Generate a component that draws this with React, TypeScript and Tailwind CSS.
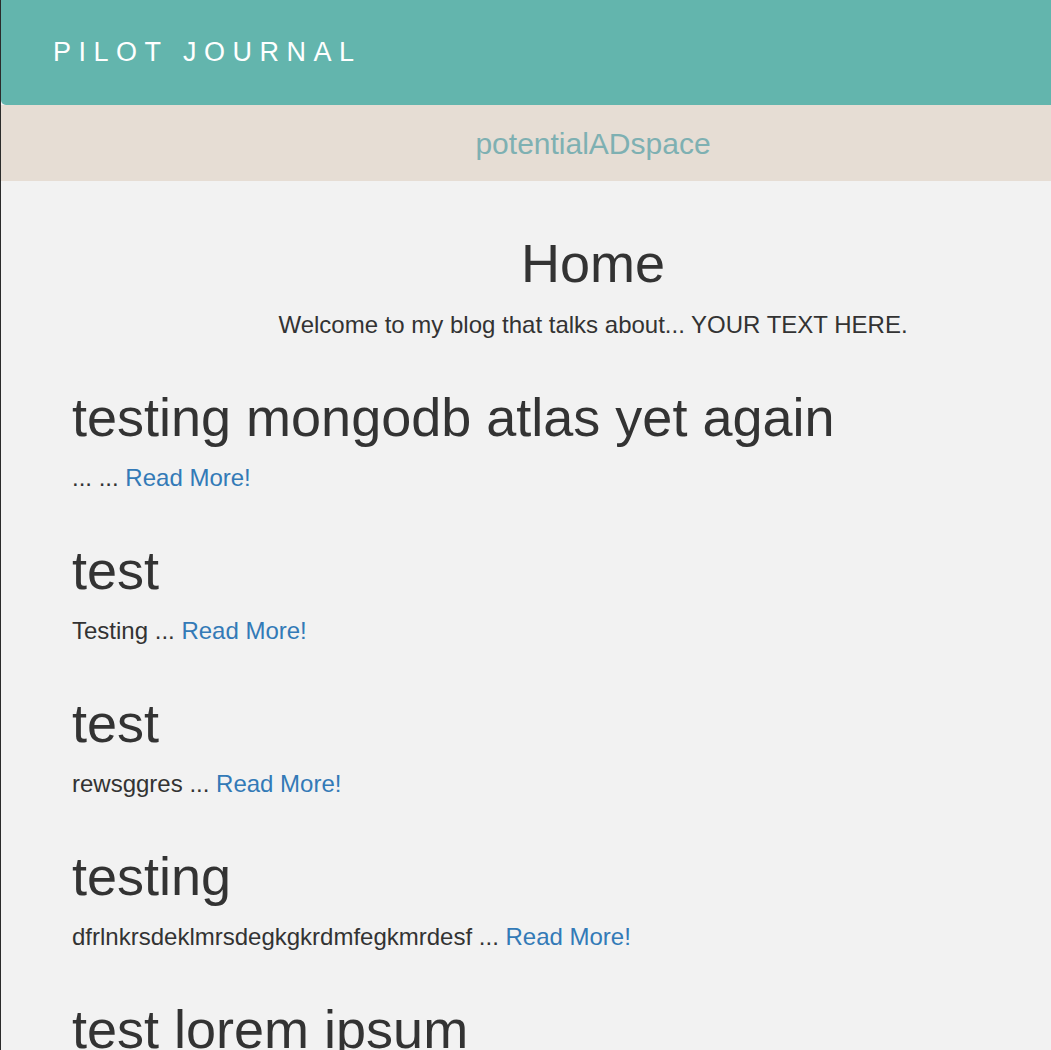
import React from "react";

type Post = { title: string; excerpt: string };

const posts: Post[] = [
  { title: "testing mongodb atlas yet again", excerpt: "... ..." },
  { title: "test", excerpt: "Testing ..." },
  { title: "test", excerpt: "rewsggres ..." },
  { title: "testing", excerpt: "dfrlnkrsdeklmrsdegkgkrdmfegkmrdesf ..." },
  { title: "test lorem ipsum", excerpt: "Lorem ipsum dolor sit amet ..." },
];

const App = () => {
  return (
    <div
      className="flex min-h-screen w-full bg-[#f2f2f2] text-[#333333]"
      style={{ fontFamily: '"Liberation Sans", Arial, sans-serif' }}
    >
      <div className="w-px shrink-0 bg-[#2b2b2b]" />
      <div className="flex min-w-0 flex-1 flex-col">
        <header className="flex h-[105px] items-center rounded-bl-[5px] bg-[#63b5ad] pl-[52px]">
          <span className="text-[27px] tracking-[7.5px] text-white">PILOT JOURNAL</span>
        </header>

        <div className="flex h-[76px] items-center justify-center bg-[#e6ddd4] pl-[134px]">
          <span className="text-[30px] text-[#7eb0b2]">potentialADspace</span>
        </div>

        <main className="flex flex-col pt-[52px]">
          <div className="flex flex-col items-center pl-[134px]">
            <h1 className="text-[54px] leading-[60px]">Home</h1>
            <p className="mt-[15px] text-[24px] leading-[34px]">
              Welcome to my blog that talks about... YOUR TEXT HERE.
            </p>
          </div>

          <div className="flex flex-col gap-[45px] pl-[71px] pt-[45px]">
            {posts.map((post, i) => (
              <div key={i} className="flex flex-col">
                <h2 className="text-[54px] leading-[60px]">{post.title}</h2>
                <p className="mt-[14px] text-[24px] leading-[34px]">
                  {post.excerpt}{" "}
                  <a href="#" className="text-[#337ab7]">
                    Read More!
                  </a>
                </p>
              </div>
            ))}
          </div>
        </main>
      </div>
    </div>
  );
};

export default App;
